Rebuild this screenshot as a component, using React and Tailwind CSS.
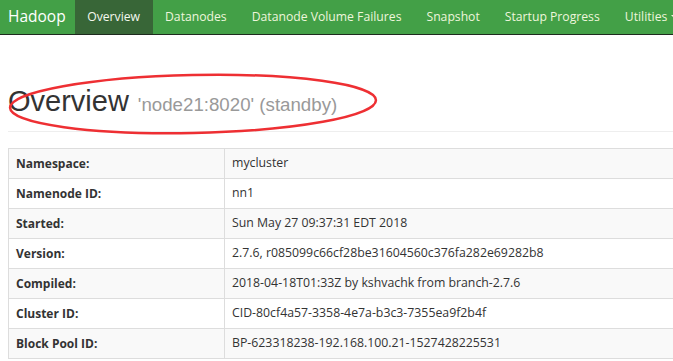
export default function App() {
  const rows = [
    ['Namespace:', 'mycluster'],
    ['Namenode ID:', 'nn1'],
    ['Started:', 'Sun May 27 09:37:31 EDT 2018'],
    ['Version:', '2.7.6, r085099c66cf28be31604560c376fa282e69282b8'],
    ['Compiled:', '2018-04-18T01:33Z by kshvachk from branch-2.7.6'],
    ['Cluster ID:', 'CID-80cf4a57-3358-4e7a-b3c3-7355ea9f2b4f'],
    ['Block Pool ID:', 'BP-623318238-192.168.100.21-1527428225531'],
  ];

  const tabs = ['Datanodes', 'Datanode Volume Failures', 'Snapshot', 'Startup Progress'];

  return (
    <div className="w-[673px] h-[361px] overflow-hidden bg-white text-[#333] font-['Open_Sans',sans-serif]">
      {/* navbar */}
      <div className="h-[35px] bg-[#43a047] border-b border-[#1e2a1e] flex items-stretch whitespace-nowrap">
        <div className="pl-2 pr-[9px] flex items-center text-[15.5px] text-white">Hadoop</div>
        <div className="px-[12.5px] flex items-center bg-[#386637] text-[12.2px] text-[#f4f8ee]">Overview</div>
        {tabs.map(t => (
          <div key={t} className="px-[12.5px] flex items-center text-[12.2px] text-[#eef6dc]">{t}</div>
        ))}
        <div className="px-[12.5px] flex items-center text-[12.2px] text-[#eef6dc]">
          Utilities
          <span className="ml-1 inline-block w-0 h-0 border-x-[4px] border-x-transparent border-t-[4px] border-t-[#eef6dc]"></span>
        </div>
      </div>

      {/* header */}
      <div className="relative pl-2">
        <div className="pt-[52px] pb-[15px] border-b border-[#eee] flex items-baseline font-['Liberation_Sans',sans-serif]">
          <span className="text-[29px] leading-none text-[#333]">Overview</span>
          <span className="ml-[9px] text-[18.7px] leading-none text-[#999]">'node21:8020' (standby)</span>
        </div>
        <svg className="absolute left-0 top-0 pointer-events-none" width="400" height="140" viewBox="0 0 400 140">
          <ellipse cx="193" cy="69" rx="183" ry="29" transform="rotate(-1.2 193 69)" fill="none" stroke="#ee2f33" strokeWidth="2.5" />
        </svg>
      </div>

      {/* table */}
      <div className="pl-2 pt-[16px]">
        <div className="w-[700px] border-t border-l border-[#ddd] text-[12.3px]">
          {rows.map(([k, v], i) => (
            <div key={k} className={`flex h-[30px] border-b border-[#ddd] ${i % 2 === 0 ? 'bg-[#f9f9f9]' : 'bg-white'}`}>
              <div className="w-[216px] shrink-0 border-r border-[#ddd] px-[7px] flex items-center font-bold text-[12px]">{k}</div>
              <div className="px-[7px] flex items-center whitespace-nowrap">{v}</div>
            </div>
          ))}
        </div>
      </div>
    </div>
  );
}
